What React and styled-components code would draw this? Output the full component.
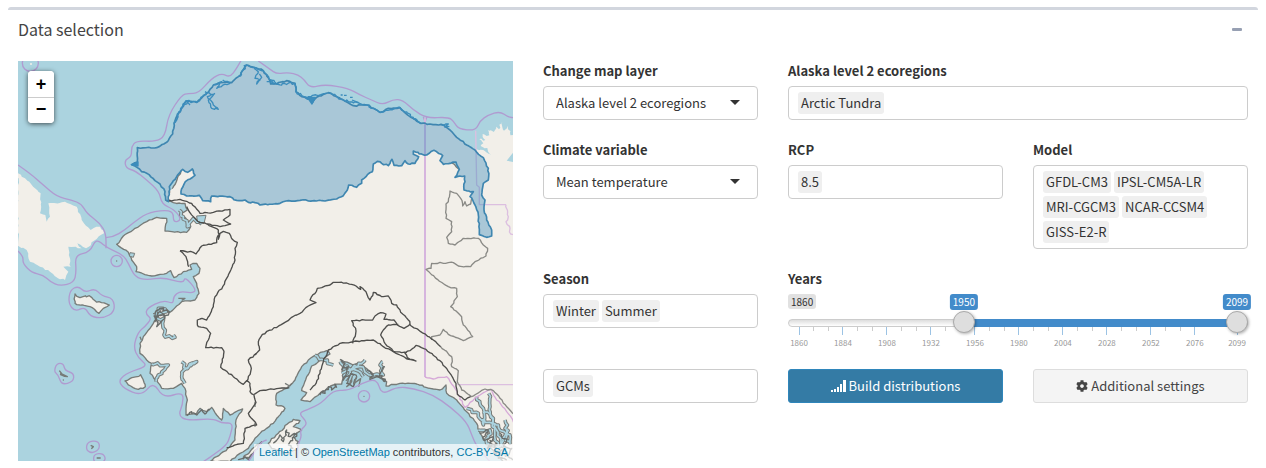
import React, { useState } from "react";
import styled, { createGlobalStyle } from "styled-components";
import { FaCog } from "react-icons/fa";

const GlobalStyle = createGlobalStyle`
  *, *::before, *::after { box-sizing: border-box; }
  body {
    margin: 0;
    background: #fff;
    color: #333;
    font-family: "Noto Sans CJK SC", "Noto Sans", sans-serif;
    font-size: 13px;
    line-height: 20px;
  }
  button, input, select { font: inherit; color: inherit; }
`;

/* ---------- panel ---------- */

const Panel = styled.section`
  margin: 7px 8px 0;
  border-top: 3px solid #d2d6de;
  border-radius: 3px;
  background: #fff;
`;

const PanelHeader = styled.header`
  display: flex;
  align-items: center;
  justify-content: space-between;
  padding: 10px;
`;

const PanelTitle = styled.h3`
  margin: 0;
  font-size: 16px;
  font-weight: 400;
  line-height: 18px;
  color: #444;
`;

const CollapseButton = styled.button`
  display: flex;
  align-items: center;
  justify-content: center;
  width: 22px;
  height: 18px;
  padding: 0;
  border: 0;
  background: transparent;
  cursor: pointer;

  &::before {
    content: "";
    width: 10px;
    height: 3px;
    border-radius: 1px;
    background: #97a0b3;
  }
`;

const PanelBody = styled.div`
  display: grid;
  grid-template-columns: repeat(12, minmax(0, 1fr));
  column-gap: 30px;
  padding: 13px 10px 0;
`;

/* ---------- map ---------- */

const MapFrame = styled.div`
  grid-column: span 5;
  position: relative;
  height: 400px;
  overflow: hidden;
  background: #abd3df;

  svg { display: block; width: 100%; height: 100%; }
`;

const ZoomControl = styled.div`
  position: absolute;
  top: 10px;
  left: 10px;
  display: flex;
  flex-direction: column;
  border-radius: 4px;
  overflow: hidden;
  background: #fff;
  box-shadow: 0 1px 5px rgba(0, 0, 0, 0.65);
`;

const ZoomButton = styled.button`
  width: 26px;
  height: 26px;
  padding: 0;
  border: 0;
  background: #fff;
  color: #000;
  font-family: "Liberation Sans", Arial, sans-serif;
  font-size: 18px;
  font-weight: 700;
  line-height: 22px;
  cursor: pointer;

  & + & { border-top: 1px solid #ccc; padding-bottom: 3px; }
`;

const Attribution = styled.div`
  position: absolute;
  right: 0;
  bottom: 0;
  padding: 0 5px;
  background: rgba(255, 255, 255, 0.7);
  font-family: "Liberation Sans", Arial, sans-serif;
  font-size: 11px;
  line-height: 17px;
  white-space: nowrap;

  a { color: #0078a8; text-decoration: none; }
`;

/* ---------- form ---------- */

const FormGrid = styled.form`
  grid-column: span 7;
  display: grid;
  grid-template-columns: repeat(3, minmax(0, 1fr));
  align-content: start;
  gap: 20px 30px;
`;

const Field = styled.div`
  grid-column: span ${(p) => p.$span || 1};
  min-width: 0;
`;

const Label = styled.label`
  display: block;
  margin-bottom: 5px;
  font-weight: 700;
`;

const SelectWrap = styled.div`
  position: relative;

  &::after {
    content: "";
    position: absolute;
    top: 14px;
    right: 18px;
    border: 5px solid transparent;
    border-top-color: #333;
    border-bottom: 0;
    pointer-events: none;
  }
`;

const Select = styled.select`
  display: block;
  width: 100%;
  height: 34px;
  padding: 0 32px 0 12px;
  border: 1px solid #ccc;
  border-radius: 4px;
  background: #fff;
  appearance: none;
`;

const TagBox = styled.div`
  display: flex;
  flex-wrap: wrap;
  gap: 3px;
  min-height: 34px;
  padding: 5px 9px;
  border: 1px solid #ccc;
  border-radius: 4px;
`;

const Tag = styled.span`
  height: 22px;
  padding: 0 3px;
  border-radius: 3px;
  background: #efefef;
  line-height: 22px;
`;

const TagInput = styled.input`
  width: 4px;
  height: 22px;
  padding: 0;
  border: 0;
  outline: 0;
  background: transparent;
`;

const ActionButton = styled.button`
  display: flex;
  align-items: center;
  justify-content: center;
  gap: 3px;
  height: 34px;
  border: 1px solid ${(p) => (p.$primary ? "#2f86bb" : "#ddd")};
  border-radius: 3px;
  background: ${(p) => (p.$primary ? "#347ba5" : "#f4f4f4")};
  color: ${(p) => (p.$primary ? "#fff" : "#444")};
  cursor: pointer;
`;

/* ---------- range slider ---------- */

const Slider = styled.div`
  position: relative;
  height: 55px;
`;

const Bubble = styled.span`
  padding: 0 3px;
  border-radius: 3px;
  font-size: 10px;
  line-height: 16px;
`;

const BubbleRow = styled.div`
  display: flex;
  height: 25px;
  align-items: flex-start;
`;

const MinBubble = styled(Bubble)`
  background: #e1e1e1;
  line-height: 15px;
`;

const ThumbBubbles = styled.div`
  position: absolute;
  top: 0;
  left: 11px;
  right: 11px;
`;

const ThumbBubble = styled(Bubble)`
  position: absolute;
  transform: translateX(-50%);
  background: #428bca;
  color: #fff;
`;

const Track = styled.div`
  height: 8px;
  padding: 0 10px;
  border: 1px solid #ccc;
  border-radius: 8px;
  background: linear-gradient(#ddd, #fff);
`;

const TrackFill = styled.div`
  height: 8px;
  margin-top: -1px;
  background: #428bca;
`;

const RangeInput = styled.input`
  position: absolute;
  top: 17px;
  left: 0;
  width: 100%;
  height: 22px;
  margin: 0;
  background: transparent;
  appearance: none;
  pointer-events: none;

  &::-webkit-slider-runnable-track { background: transparent; }
  &::-webkit-slider-thumb {
    appearance: none;
    width: 22px;
    height: 22px;
    border: 1px solid #aaa;
    border-radius: 50%;
    background: #dedede;
    box-shadow: 1px 1px 3px rgba(0, 0, 0, 0.3);
    pointer-events: auto;
    cursor: pointer;
  }
`;

const Scale = styled.div`
  display: flex;
  padding: 0 11px;
`;

const Segment = styled.div`
  flex: ${(p) => p.$years} 0 0;
  display: flex;
  justify-content: space-between;
`;

const Tick = styled.div`
  width: 0;
  display: flex;
  flex-direction: column;
  align-items: center;
  color: #999;
  font-size: 8px;
  line-height: 16px;

  &::before {
    content: "";
    flex: none;
    width: 1px;
    height: ${(p) => (p.$minor ? 4 : 8)}px;
    background: ${(p) => (p.$minor ? "#ccc" : "#9cc3e4")};
  }
`;

/* ---------- map geometry ---------- */

const parse = (s) => s.trim().split(/\s+/).map((p) => p.split(",").map(Number));

// Breaks straight runs into short uneven steps, as a surveyed shoreline has.
function rough(s, amp = 2, step = 9, closed = false) {
  const pts = parse(s);
  if (closed) pts.push(pts[0]);
  let seed = Math.round(pts[0][0] * 7 + pts[0][1] * 13);
  const rnd = () => {
    seed = (seed * 9301 + 49297) % 233280;
    return seed / 233280 - 0.5;
  };
  let d = `M${pts[0]}`;
  for (let i = 1; i < pts.length; i++) {
    const [x0, y0] = pts[i - 1];
    const [x1, y1] = pts[i];
    const n = Math.max(1, Math.round(Math.hypot(x1 - x0, y1 - y0) / step));
    for (let k = 1; k <= n; k++) {
      const t = k / n;
      const a = k === n ? 0 : amp * 2;
      d += `L${(x0 + (x1 - x0) * t + rnd() * a).toFixed(1)},${(y0 + (y1 - y0) * t + rnd() * a).toFixed(1)}`;
    }
  }
  return closed ? d + "Z" : d;
}

// Rounded line through the midpoints of the given points.
function smooth(s, closed = false) {
  const p = parse(s);
  const mid = (a, b) => [(a[0] + b[0]) / 2, (a[1] + b[1]) / 2];
  if (closed) {
    const n = p.length;
    let d = `M${mid(p[n - 1], p[0])}`;
    for (let i = 0; i < n; i++) d += `Q${p[i]} ${mid(p[i], p[(i + 1) % n])}`;
    return d + "Z";
  }
  let d = `M${p[0]}`;
  for (let i = 1; i < p.length - 1; i++) d += `Q${p[i]} ${mid(p[i], p[i + 1])}`;
  return d + `L${p[p.length - 1]}`;
}

const ARCTIC_COAST = "505,605 497,600 495,575 480,552 465,542 440,520 425,515 412,503 395,494 412,486 412,443 470,443 500,427 518,402 522,370 535,340 558,303 590,307 620,280 640,255 660,248 695,248 715,230 740,195 752,200 765,203 790,212 806,235 812,252 830,252 860,242 885,250 888,275 905,290 930,298 937,308 950,292 985,278 1010,290 1030,300 1060,317 1100,315 1120,325 1140,337 1165,325 1200,323 1230,350 1262,370 1290,372 1330,375 1350,390 1370,412 1400,435 1425,450 1450,473 1465,505 1465,540 1450,550 1445,585";
const ARCTIC_INLAND = "1445,585 1455,600 1452,630 1460,660 1475,690 1475,708 1460,712 1438,704 1435,645 1425,615 1418,600 1410,590 1420,575 1392,570 1394,528 1365,532 1378,508 1368,486 1330,493 1320,482 1328,467 1302,451 1280,465 1258,462 1240,453 1240,463 1256,470 1245,490 1225,492 1215,482 1205,497 1182,496 1176,478 1165,497 1145,490 1132,484 1120,492 1117,515 1098,530 1085,540 1085,550 1070,562 1046,555 1042,570 1030,587 1010,597 975,603 900,601 858,603 840,610 780,615 765,608 745,607 735,600 710,601 690,590 660,588 635,588 632,605 608,602 598,586 560,588 543,582 548,562 556,545 585,526 577,507 563,517 548,508 530,530 508,560";

const MAINLAND = "497,600 520,608 555,610 562,630 545,640 562,665 572,680 560,697 495,693 500,655 470,652 440,665 405,685 370,708 350,733 385,757 395,780 410,800 408,815 455,828 500,820 512,812 522,833 530,830 550,815 575,808 570,795 590,790 600,805 597,820 580,830 590,850 597,880 585,900 545,905 510,937 490,922 470,935 475,950 460,970 430,1010 420,1030 420,1060 440,1080 455,1090 450,1120 468,1140 485,1165 520,1165 545,1150 555,1165 562,1200 558,1245 590,1240 600,1225 620,1235 635,1222 650,1245 665,1260 670,1225 690,1245 728,1227 708,1260 705,1320 690,1340 650,1370 630,1385 690,1385 720,1360 745,1345 765,1315 780,1300 800,1285 820,1270 835,1250 855,1225 843,1217 828,1215 830,1180 860,1165 885,1140 905,1100 925,1080 945,1066 980,1052 990,1062 965,1080 935,1098 920,1130 905,1172 920,1178 903,1200 930,1205 960,1180 1000,1155 1025,1152 1030,1120 1025,1080 1060,1095 1080,1088 1105,1110 1130,1130 1160,1145 1158,1158 1200,1150 1250,1152 1290,1165 1320,1170 1338,1155 1340,1180 1370,1200 1400,1235 1430,1270 1440,1300 1470,1340 1510,1385 1545,1385 1545,560 1440,560 1300,440 1000,380 700,380 560,480 520,560";

const NORTHEAST = "1545,412 1530,398 1522,378 1512,392 1506,366 1497,388 1488,380 1482,396 1464,390 1468,406 1448,402 1456,420 1438,418 1450,430 1442,438 1462,444 1474,466 1450,450 1425,447 1400,600 1545,600";

const SIBERIA = "54,520 75,535 105,565 122,580 120,640 136,645 140,665 150,650 145,610 195,605 230,620 245,660 272,690 300,680 312,700 282,722 258,745 232,730 245,745 205,740 212,800 190,800 205,815 195,840 180,838 150,815 120,800 90,785 80,750 54,737";

const ISLANDS = [
  "225,882 240,893 268,887 285,902 328,915 310,925 297,940 270,920 225,910",
  "375,1143 422,1124 436,1160 415,1168 392,1158",
  "805,1330 835,1300 880,1258 900,1262 880,1280 905,1290 880,1310 895,1325 890,1350 860,1362 815,1345",
  "730,1372 765,1340 785,1325 765,1350 748,1372",
  "1040,1160 1055,1145 1057,1130 1050,1150",
];

const RIDGES = [
  "765,1065 779,1050 775,1025 787,1003 850,970 875,952 900,940 925,918 948,908 930,900 952,865 990,855 1000,847 1040,849 1068,858 1082,868 1080,860 1098,875 1110,900 1120,877 1145,890 1165,888 1175,910 1190,915 1202,937 1225,960 1230,973 1212,985 1192,975 1182,960 1152,958 1158,942 1142,938 1125,948 1118,960 1055,962 1068,993 1058,1030",
  "1228,973 1262,995 1300,1020 1322,1040",
  "930,1170 945,1155 960,1120 970,1085 985,1050 1020,1030 1060,1025 1085,1022 1120,1020 1150,1040 1180,1055 1200,1065 1225,1078 1248,1083 1222,1073 1215,1060 1248,1036 1278,1048 1320,1082 1350,1120 1368,1150 1372,1183 1395,1200 1412,1190",
  "1195,973 1165,975 1150,990 1142,1005 1155,1030 1180,1054 1205,1058 1220,1058",
  "500,603 540,598 575,610 600,640 640,637 690,628 690,645 670,660 692,672 660,680 620,672 600,668 580,650 560,620",
  "622,672 655,690 655,718 660,700 670,694 688,700 697,718 712,727 705,745 705,780 690,815 668,860 645,890 640,920 620,960 606,955 600,957 592,960 595,980 620,985 632,1000 625,1020 617,1043 665,1043 672,1055 662,1102 700,1130 730,1153 740,1142 750,1150 750,1175 762,1185 768,1208 745,1240 770,1275 735,1285 730,1330 680,1343",
  "770,1060 745,1080 754,1105 740,1145",
  "762,1183 780,1172 830,1166 868,1163",
  "540,752 580,757 588,762 605,738 650,728 655,705",
  "540,752 558,770 566,800",
];

const BORDERLANDS = [
  "1322,1040 1355,1070 1355,1100 1375,1112 1372,1145 1385,1170 1415,1190 1440,1175 1455,1167 1480,1172 1500,1195 1545,1245",
  "1415,595 1412,612 1400,618 1395,605 1388,618 1382,595 1370,580 1350,573 1345,605 1338,612 1338,655 1355,665 1355,695 1340,712 1345,730 1365,735 1390,715 1435,715 1450,735 1463,745 1458,768 1425,785 1412,800 1375,798 1360,788 1345,788 1295,790 1293,805 1278,808 1312,838 1345,860 1370,865 1372,890 1352,920 1385,950 1390,975 1400,985 1418,1010 1390,1022 1345,1003 1330,988 1320,1005 1295,1010 1295,1020",
];

const CHANNELS = [
  "460,945 485,940 500,935 475,925 470,955 490,955 492,1005 525,1012 520,1005",
  "555,1150 545,1130 552,1110 590,1085 560,1105 545,1085",
  "455,1092 505,1095 495,1108 475,1125 468,1145",
  "605,672 580,655 562,680 550,650 538,630",
  "945,1066 965,1078 1000,1095",
  "1020,1085 1050,1110 1095,1080",
  "1035,1140 1060,1100 1090,1130",
  "1025,1120 1080,1100 1110,1125 1150,1125 1140,1095 1148,1085",
  "1430,1190 1450,1225 1480,1255 1484,1310 1500,1370",
  "1466,1180 1470,1240 1490,1290 1520,1370",
  "1445,1260 1495,1275 1530,1330 1515,1260",
  "1435,1290 1470,1290 1460,1330 1500,1340 1520,1290",
  "1400,1225 1435,1240 1450,1275 1450,1235",
];

const SPRAWL = [
  "462,950 480,925 500,930 505,945 480,945 465,965 480,935 495,950 470,980 475,935",
  "1020,1078 1035,1090 1025,1110 1045,1100 1030,1140 1050,1125 1040,1150 1060,1160 1070,1130 1050,1120",
  "1100,1110 1120,1125 1110,1140 1135,1130 1155,1145 1140,1120 1155,1100",
  "1440,1300 1465,1290 1450,1320 1480,1310 1462,1345 1490,1330 1480,1360 1505,1350 1495,1375 1520,1380",
  "1500,1300 1520,1320 1510,1340 1535,1345 1525,1370 1540,1380",
  "560,1247 575,1235 590,1245 605,1230 615,1242 630,1228",
  "960,1185 970,1172 975,1180 985,1160 995,1170 1005,1152 1010,1163",
  "820,1330 840,1305 850,1325 860,1290 870,1310 890,1300 865,1335 880,1345",
  "715,1380 735,1370 745,1378 755,1362",
];

const LAGOONS = [
  "762,205 775,215 765,235 780,240 770,252 785,232 778,222",
  "615,275 640,285 625,300 635,325 655,328 640,315 622,290 645,280",
  "640,255 665,245 650,265 690,250 668,240",
  "810,240 822,252 800,245",
  "915,292 940,305 925,290 960,285 980,280",
  "525,365 545,325 562,305 570,315",
  "1325,375 1345,372 1335,382 1348,380",
];

const MARITIME = [
  "54,495 90,520 130,555 170,590 215,600 245,612 260,640 300,670 318,700 318,745",
  "318,713 338,712 375,690 400,668 440,640 490,630 520,635 520,668 545,660 525,630 485,612 478,575 440,540 405,512 378,505 374,480 395,470 394,440 410,422 465,425 495,410 505,345 545,285 565,280 595,280 635,235 665,220 690,232 710,205 724,180",
  "775,183 810,208 830,222 865,217 895,225 912,238 930,264 975,253 1045,265 1080,285 1115,300 1148,315 1180,298 1208,300 1240,330 1280,355 1345,351 1362,365 1375,387 1427,392 1440,362 1465,345 1500,334 1525,352 1545,353",
  "54,753 70,768 68,790 95,818 130,825 150,845 180,858 222,848 229,815 225,765 270,757 288,715 318,742 370,765 385,790 405,832 440,840 490,832 550,850 555,830 590,870 575,880 540,873 520,890 520,912 490,900 440,925 438,945 455,955 435,980 415,995 400,1040 415,1075 445,1098 385,1117 355,1140 370,1165 425,1188 460,1145 490,1195 550,1175 548,1215 535,1245 560,1262 640,1255 665,1270 700,1268 690,1310 680,1335 640,1365 610,1385",
  "745,1385 768,1350 785,1325 800,1320",
  "893,1385 893,1335 905,1310 900,1290 925,1270 895,1240 920,1230 965,1210 1000,1170 1045,1172 1085,1150 1130,1135 1145,1185 1190,1160 1240,1165 1300,1185 1350,1220 1400,1265 1415,1305 1430,1340 1470,1385",
];

const RINGS = [
  "210,870 235,858 255,878 285,865 305,888 340,895 345,935 310,955 270,950 255,920 225,935 205,910",
  "170,1090 190,1090 195,1112 222,1120 220,1145 185,1155 175,1125 162,1115",
  "262,1325 295,1322 300,1345 280,1360 258,1352",
  "282,1362 310,1360 318,1380 300,1390 280,1385",
];

function EcoregionMap() {
  const tundra = rough(ARCTIC_COAST + " " + ARCTIC_INLAND, 2, 8, true);
  return (
    <svg viewBox="54 183 1485 1200" preserveAspectRatio="xMidYMid slice" role="img" aria-label="Alaska ecoregions" strokeLinejoin="round" fill="none">
      <g fill="#f2efe9">
        <path d={rough(SIBERIA, 3, 9, true)} />
        <path d={rough(MAINLAND, 2, 9, true)} stroke="#777b78" strokeWidth="4" />
        <path d={rough(NORTHEAST, 4, 6, true)} />
        <path d={tundra} />
        <path d="M515,597L550,600L600,600L560,575L530,560L510,570z" />
        {ISLANDS.map((s) => <path key={s} d={rough(s, 3, 8, true)} stroke="#777b78" strokeWidth="4" />)}
      </g>
      <path d="M1520,482l19,-24v28z" fill="#abd3df" />

      <g stroke="#777b78" strokeWidth="11">
        {CHANNELS.map((s) => <path key={s} d={rough(s, 5, 8)} />)}
      </g>
      <g stroke="#abd3df" strokeWidth="5">
        {CHANNELS.map((s) => <path key={s} d={rough(s, 5, 8)} />)}
      </g>
      <g stroke="#686c6a" strokeWidth="4">
        {SPRAWL.map((s) => <path key={s} d={rough(s, 5, 6)} />)}
      </g>
      <path d="M590,648l28,-2l-6,24l-20,-6z" fill="#abd3df" stroke="#777b78" strokeWidth="3" />
      <path d="M390,758l14,2l-4,12l-12,-4z" fill="#abd3df" stroke="#777b78" strokeWidth="3" />

      <g stroke="#777b78" strokeWidth="4">
        <path d="M178,1112l8,10l-4,-2l20,10l-8,-1l-14,-6M272,1336l8,4l-6,6M290,1374h12" />
        <path d="M855,1150l14,8l6,-8M1070,1130l-8,20l20,-14l-6,24M535,895h20l-10,6M420,1010l4,10M765,1205v16M765,1268v12" />
      </g>
      <g fill="#777b78">
        <circle cx="350" cy="783" r="2" />
        <circle cx="1092" cy="1189" r="2" />
        <circle cx="190" cy="1140" r="2" />
      </g>
      <circle cx="93" cy="192" r="3" fill="#f2efe9" />

      <g stroke="#b09bd0" strokeWidth="4">
        {MARITIME.map((s) => <path key={s} d={smooth(s)} />)}
        {RINGS.map((s) => <path key={s} d={smooth(s, true)} />)}
        <circle cx="91" cy="190" r="24" />
        <circle cx="350" cy="783" r="17" />
        <circle cx="1092" cy="1189" r="17" />
        <path d="M1270,350l5,15l6,-15" />
      </g>
      <g stroke="#dcbfe0" strokeWidth="4">
        <path d="M1275,355V1131" strokeWidth="6" stroke="#d6b5de" />
        <path d={rough("1275,1131 1300,1137 1340,1130 1365,1165 1395,1222 1440,1185 1475,1168 1490,1200 1520,1235 1545,1275", 3, 9)} stroke="#d6a9d8" />
        <path d="M1372,1154H1545" />
        <path d="M1427,392L1430,555L1438,562V614H1518" />
        <path d={rough("1518,614 1525,650 1518,665 1530,685 1532,702 1545,705", 3, 7)} />
      </g>

      <g stroke="#8a8a86" strokeWidth="4">
        {BORDERLANDS.map((s) => <path key={s} d={rough(s, 2, 8)} />)}
      </g>
      <g stroke="#4e4e4c" strokeWidth="4">
        {RIDGES.map((s) => <path key={s} d={rough(s, 2, 8)} />)}
      </g>

      <path d={tundra} fill="#3c8dbc" fillOpacity="0.4" stroke="none" />
      <path d={tundra} stroke="#3f86b0" strokeWidth="5" />
      <g stroke="#3c8dbc" strokeWidth="4">
        {LAGOONS.map((s) => <path key={s} d={rough(s, 3, 7)} />)}
        <path d={rough("715,230 740,195 765,203 790,212 806,235 830,252 885,250 888,275 930,298", 4, 6)} />
        <path d={rough("985,278 1030,300 1100,315 1140,337 1200,323 1262,370", 3, 6)} />
        <path d={rough("522,370 535,340 558,303 590,307 620,280", 4, 6)} />
        <path d="M1022,285h6M1032,286h8M1050,292h8M1056,300l20,8M922,292l14,20l10,-20z" fill="#3c8dbc" />
        <path d="M394,494l20,-8v12z" fill="#3c8dbc" />
      </g>
    </svg>
  );
}

/* ---------- page ---------- */

function TagField({ id, label, tags, span, ariaLabel }) {
  return (
    <Field $span={span}>
      {label && <Label htmlFor={id}>{label}</Label>}
      <TagBox>
        {tags.map((t) => <Tag key={t}>{t}</Tag>)}
        <TagInput id={id} type="text" aria-label={ariaLabel} />
      </TagBox>
    </Field>
  );
}

function SelectField({ id, label, options }) {
  return (
    <Field>
      <Label htmlFor={id}>{label}</Label>
      <SelectWrap>
        <Select id={id}>
          {options.map((o) => <option key={o}>{o}</option>)}
        </Select>
      </SelectWrap>
    </Field>
  );
}

const MIN = 1860;
const MAX = 2099;
const MAJORS = [1860, 1884, 1908, 1932, 1956, 1980, 2004, 2028, 2052, 2076];
const percent = (v) => ((v - MIN) / (MAX - MIN)) * 100;

function YearSlider() {
  const [from, setFrom] = useState(1950);
  const [to, setTo] = useState(2099);
  return (
    <Field $span={2}>
      <Label htmlFor="year-from">Years</Label>
      <Slider>
        <BubbleRow>
          <MinBubble>{MIN}</MinBubble>
        </BubbleRow>
        <ThumbBubbles>
          <ThumbBubble style={{ left: `${percent(from)}%` }}>{from}</ThumbBubble>
          <ThumbBubble style={{ left: `${percent(to)}%` }}>{to}</ThumbBubble>
        </ThumbBubbles>
        <Track>
          <TrackFill style={{ marginLeft: `${percent(from)}%`, width: `${percent(to) - percent(from)}%` }} />
        </Track>
        <Scale>
          {MAJORS.map((y) => {
            const years = Math.min(24, MAX - y);
            return (
              <Segment key={y} $years={years}>
                <Tick>{y}</Tick>
                {years === 24 && <Tick $minor />}
                {years === 24 && <Tick $minor />}
                <span />
              </Segment>
            );
          })}
          <Tick>{MAX}</Tick>
        </Scale>
        <RangeInput id="year-from" type="range" min={MIN} max={MAX} value={from}
          onChange={(e) => setFrom(Math.min(+e.target.value, to))} />
        <RangeInput aria-label="Last year" type="range" min={MIN} max={MAX} value={to}
          onChange={(e) => setTo(Math.max(+e.target.value, from))} />
      </Slider>
    </Field>
  );
}

function SignalIcon() {
  return (
    <svg width="15" height="12" viewBox="0 0 15 12" fill="currentColor" aria-hidden="true">
      <path d="M0 10h2v2H0zM3 9h2v3H3zM6 7h2v5H6zM9 4h2v8H9zM12 0h3v12h-3z" />
    </svg>
  );
}

export default function App() {
  return (
    <>
      <GlobalStyle />
      <Panel>
        <PanelHeader>
          <PanelTitle>Data selection</PanelTitle>
          <CollapseButton type="button" aria-label="Collapse" />
        </PanelHeader>
        <PanelBody>
          <MapFrame>
            <EcoregionMap />
            <ZoomControl>
              <ZoomButton type="button" aria-label="Zoom in">+</ZoomButton>
              <ZoomButton type="button" aria-label="Zoom out">−</ZoomButton>
            </ZoomControl>
            <Attribution>
              <a href="#leaflet">Leaflet</a> | © <a href="#osm">OpenStreetMap</a> contributors, <a href="#license">CC-BY-SA</a>
            </Attribution>
          </MapFrame>
          <FormGrid onSubmit={(e) => e.preventDefault()}>
            <SelectField id="layer" label="Change map layer" options={["Alaska level 2 ecoregions"]} />
            <TagField id="regions" label="Alaska level 2 ecoregions" span={2} tags={["Arctic Tundra"]} />
            <SelectField id="variable" label="Climate variable" options={["Mean temperature"]} />
            <TagField id="rcp" label="RCP" tags={["8.5"]} />
            <TagField id="model" label="Model" tags={["GFDL-CM3", "IPSL-CM5A-LR", "MRI-CGCM3", "NCAR-CCSM4", "GISS-E2-R"]} />
            <TagField id="season" label="Season" tags={["Winter", "Summer"]} />
            <YearSlider />
            <TagField id="source" ariaLabel="Data source" tags={["GCMs"]} />
            <ActionButton type="submit" $primary><SignalIcon />Build distributions</ActionButton>
            <ActionButton type="button"><FaCog size={12} aria-hidden="true" />Additional settings</ActionButton>
          </FormGrid>
        </PanelBody>
      </Panel>
    </>
  );
}
